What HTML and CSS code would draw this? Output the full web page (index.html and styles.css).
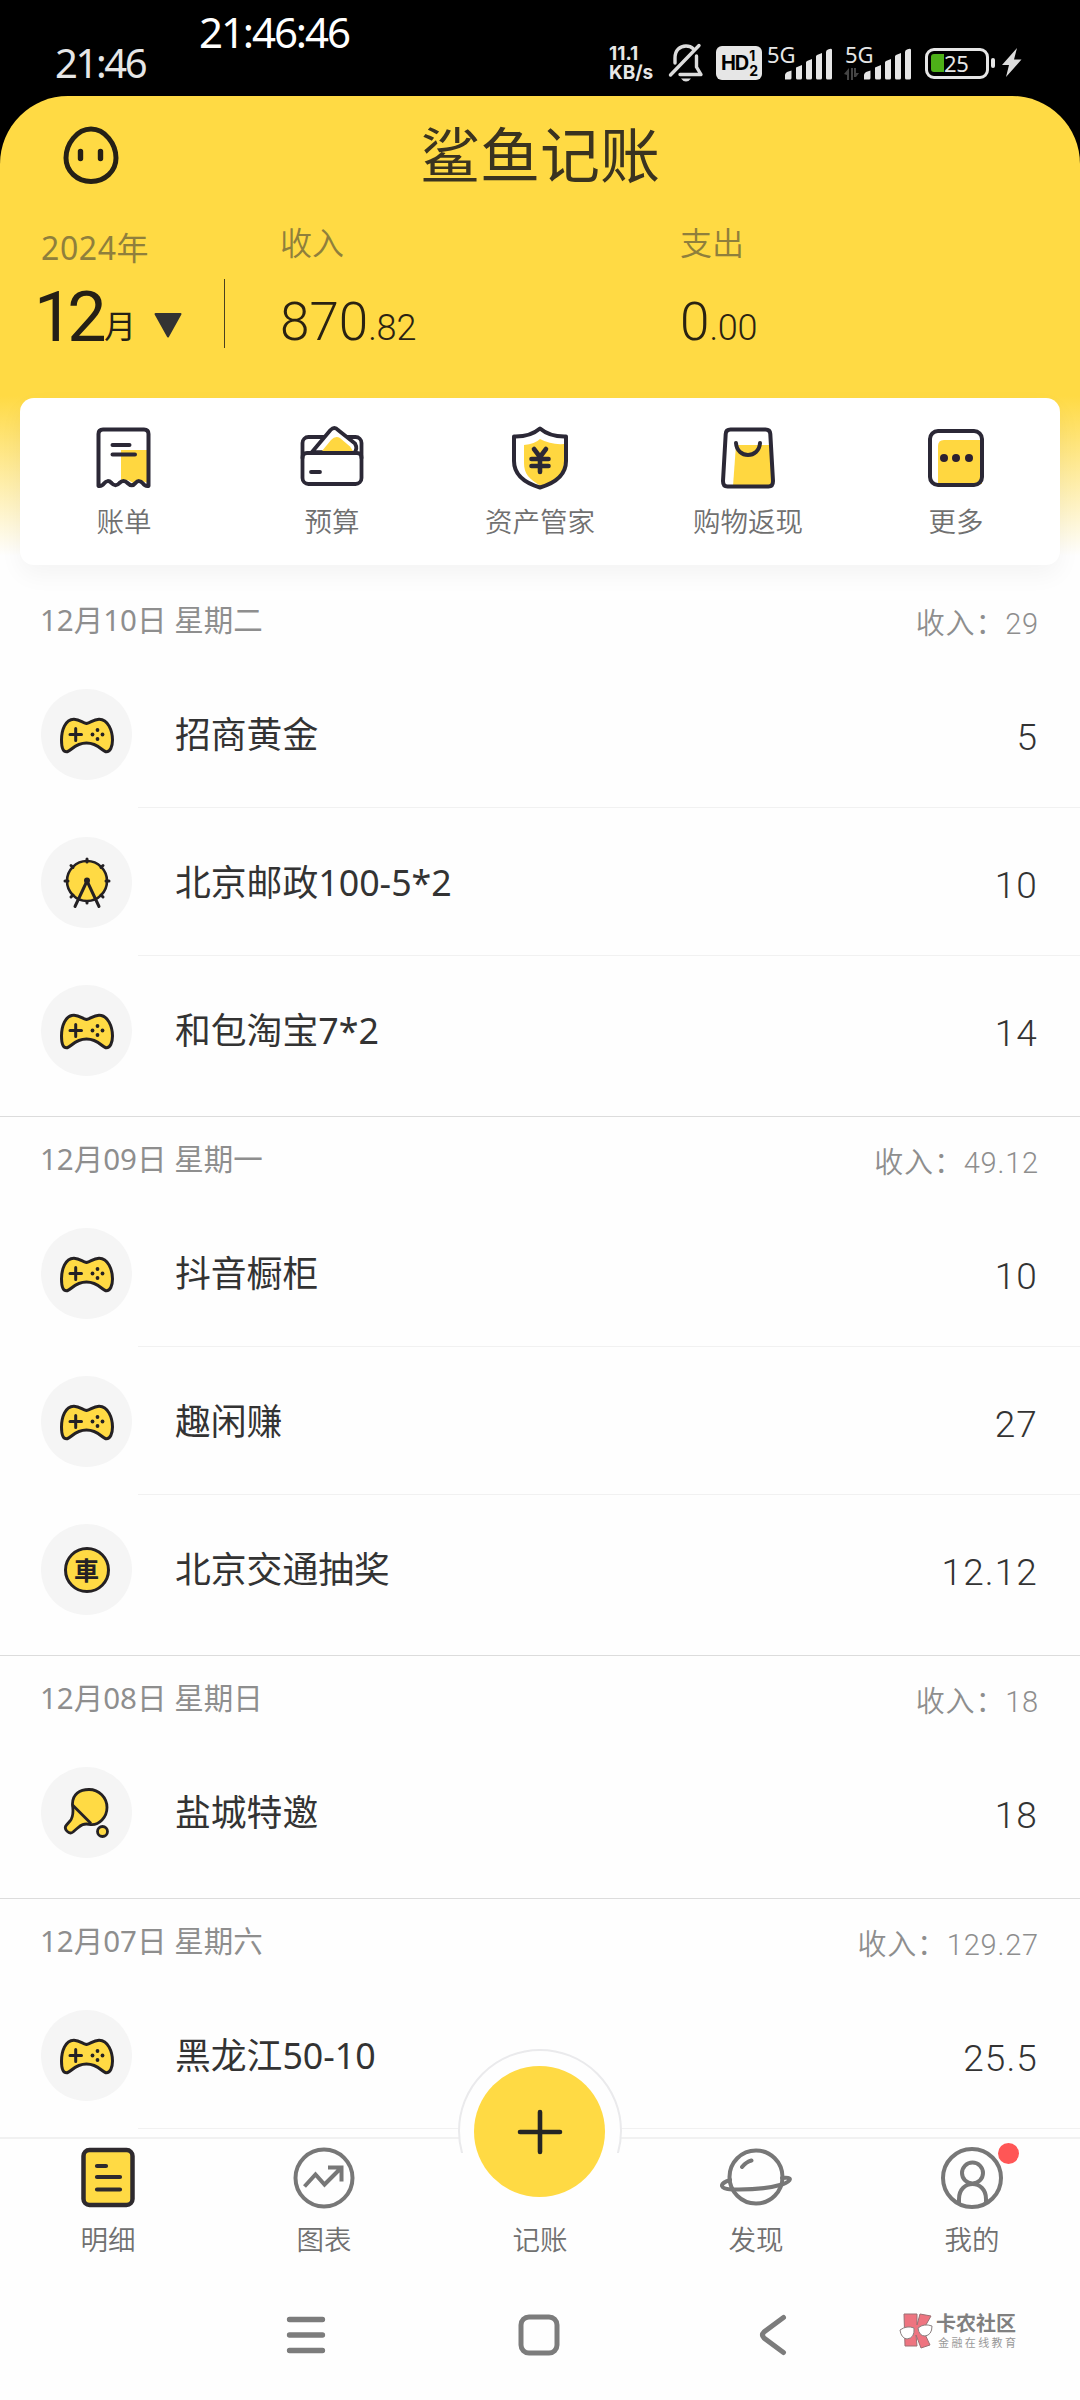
FILE: index.html
```html
<!DOCTYPE html>
<html lang="zh-CN">
<head>
<meta charset="utf-8">
<title>鲨鱼记账</title>
<link rel="stylesheet" href="styles.css">
</head>
<body>
<svg class="defs" width="0" height="0" aria-hidden="true">
  <symbol id="gamepad" viewBox="0 0 56 38">
    <path d="M27.500 7.500C32 6.500 34 3.500 40 3.200C49 3 53.500 15 53.500 24C53.500 31 51 35.800 47.500 35.800C43 35.800 40 27 27.500 27S12 35.800 7.500 35.800C4 35.800 2.500 31 2.500 24C2.500 15 6 3 15 3.200C21 3.500 23 6.500 27.500 7.500Z" fill="#ffda44" stroke="#242124" stroke-width="3"/>
    <path d="M11 18.500H22.500M16.700 12.500V24.500" stroke="#242124" stroke-width="3" stroke-linecap="round"/>
    <g fill="#242124"><circle cx="38.500" cy="14" r="1.900"/><circle cx="43.500" cy="18.500" r="1.900"/><circle cx="38.500" cy="23" r="1.900"/><circle cx="33.500" cy="18.500" r="1.900"/></g>
  </symbol>
  <symbol id="wheel" viewBox="0 0 50 54">
    <g fill="none" stroke="#242124" stroke-width="3" stroke-linecap="round">
      <circle cx="25" cy="25" r="20" fill="#ffda44" stroke-width="2.600"/>
      <path d="M25 3V6M3 25H6M44 25H47M9 9.500L11 11.500M41 9.500L39 11.500M9 41L11 39M41 41L39 39M25 45.500V47"/>
      <path d="M25 25L13 50.500M25 25L37 50.500"/>
    </g>
    <circle cx="25" cy="24.500" r="3" fill="#242124"/>
  </symbol>
  <symbol id="paddle" viewBox="0 0 48 52">
    <g stroke="#242124" stroke-width="2.800" fill="#ffda44" stroke-linejoin="round">
      <path d="M9.500 18C9 7 17 2.500 26 2.500C36 2.500 44 10.500 44 20.500C44 30.500 36 38 28 37.500C20 36 18 38 14 41.500L10 45C6 48 0 42 3.500 38L7 34C10.500 30 10.500 25 9.500 18Z"/>
      <path d="M9.500 18L28 36.500" fill="none"/>
      <circle cx="39.500" cy="44.500" r="5"/>
    </g>
  </symbol>
  <symbol id="signal" viewBox="0 0 48 32">
    <path d="M1 31.500V27Q1 25.500 3 24L7.500 22.500V30Q7.500 31.500 6 31.500ZM12 19.500L18 17V30Q18 31.500 16.500 31.500H13.500Q12 31.500 12 30ZM22 14.500Q22 13.500 23 13L28 11V30Q28 31.500 26.500 31.500H23.500Q22 31.500 22 30ZM32 8.500Q32 7.500 33 7L38 5V30Q38 31.500 36.500 31.500H33.500Q32 31.500 32 30ZM42 4Q42 2 44 1.500Q48 0 48 2V30Q48 31.500 46.500 31.500H43.500Q42 31.500 42 30Z" fill="#e6e6e6"/>
  </symbol>
</svg>

<div class="screen">
  <div class="status">
    <span class="status-time">21:46</span>
    <span class="status-clock">21:46:46</span>
    <div class="status-icons">
      <div class="net"><span>11.1</span><span>KB/s</span></div>
      <svg class="bell" width="36" height="40" viewBox="0 0 36 40" fill="none" stroke="#dcdcdc" stroke-width="3.400" stroke-linecap="round" stroke-linejoin="round">
        <path d="M7 20V15C7 7 12 3 18 3C21 3 23.500 4 25 5.500M28.500 13V24L33 31.500H12"/><path d="M2.500 32L31 2.500"/><path d="M13 35.500H23Q21 38.500 18 38.500T13 35.500Z" fill="#dcdcdc" stroke="none"/>
      </svg>
      <div class="hd"><span>HD</span><div class="hd-num"><span>1</span><span>2</span></div></div>
      <div class="cell"><span>5G</span><svg width="48" height="32"><use href="#signal"/></svg></div>
      <div class="cell cell-data"><span>5G</span><svg class="arrows" width="15" height="12" viewBox="0 0 15 12"><path d="M0 6L5 0V12H3V7ZM7 0H9L9 12H7ZM10 0H12V5H15L12 9H10Z" fill="#444"/></svg><svg width="48" height="32"><use href="#signal"/></svg></div>
      <div class="battery"><span class="battery-level"></span><span class="battery-text">25</span></div>
      <span class="battery-tip"></span>
      <svg class="bolt" width="20" height="30" viewBox="0 0 20 30"><path d="M15 0L0 17H7L4 29L19.500 11.500H12Z" fill="#dcdcdc"/></svg>
    </div>
  </div>

  <div class="app">
    <header class="top">
      <div class="title-row">
        <svg class="face" width="56" height="58" viewBox="0 0 56 58"><path d="M28 3C42 3 53 18 53 32C53 45 42 55.500 28 55.500S3 45 3 32C3 18 14 3 28 3Z" fill="none" stroke="#252016" stroke-width="5"/><path d="M17.500 25.500V32.500M37.500 25.500V32.500" stroke="#252016" stroke-width="5.400" stroke-linecap="round"/></svg>
        <h1>鲨鱼记账</h1>
      </div>
      <div class="summary">
        <div class="month-box">
          <div class="year">2024年</div>
          <div class="month"><b>12</b><span>月</span><svg width="28" height="25" viewBox="0 0 28 25"><path d="M1.500 1H26.500L14 23.500Z" fill="#333" stroke="#333" stroke-width="2" stroke-linejoin="round"/></svg></div>
        </div>
        <div class="sum"><div class="sum-label">收入</div><div class="sum-value">870<small>.82</small></div></div>
        <div class="sum"><div class="sum-label">支出</div><div class="sum-value">0<small>.00</small></div></div>
      </div>
    </header>

    <section class="card">
      <div class="tool">
        <svg width="56" height="64" viewBox="0 0 56 64"><path d="M25 24H52V57L46 55L39 58L32 54L25 57Z" fill="#ffd740"/><path d="M2.500 60V8Q2.500 3.500 7 3.500H48Q52.500 3.500 52.500 8V60Q49 60.500 47 57.500Q43 53 39.500 57Q36 61.500 31.500 57Q27.500 53 23.500 57Q19.500 61.500 15.500 57Q11.500 53 8 57.500Q6 60.500 2.500 60Z" fill="none" stroke="#2b2836" stroke-width="4" stroke-linejoin="round"/><path d="M16.500 19H33.500M16.500 28.500H39" stroke="#2b2836" stroke-width="4" stroke-linecap="round"/></svg>
        <span>账单</span>
      </div>
      <div class="tool">
        <svg width="64" height="64" viewBox="0 0 64 64"><g fill="none" stroke="#2b2836" stroke-width="3.800" stroke-linejoin="round" stroke-linecap="round"><rect x="2.500" y="11" width="59" height="47" rx="6"/><path d="M12 26L30.500 4Q34.500 0 38 4L55 17.500Q58 23 54 27Z" fill="#fff"/><path d="M22 25L31 14Q35.500 9 40 12L50 20.500L53 25Z" fill="#ffd740" stroke="none"/><path d="M2.500 32Q2.500 27 7 27H57Q61.500 27 61.500 32"/><path d="M11 46H20"/></g></svg>
        <span>预算</span>
      </div>
      <div class="tool">
        <svg width="60" height="66" viewBox="0 0 60 66"><path d="M14 20Q25 19 30 14Q41 20 54 19V38C54 50 44 57 31 61C19 54 14 49 14 38Z" fill="#ffd740"/><path d="M30 3.500Q40 12 56 11.500V36C56 50 45 58 30 62.500C15 58 4 50 4 36V11.500Q20 12 30 3.500Z" fill="none" stroke="#2b2836" stroke-width="4" stroke-linejoin="round"/><path d="M24 24L30 32L36 24M30 33V47M21.500 34H38.500M21.500 41H38.500" fill="none" stroke="#2b2836" stroke-width="4.600" stroke-linecap="round" stroke-linejoin="round"/></svg>
        <span>资产管家</span>
      </div>
      <div class="tool">
        <svg width="56" height="64" viewBox="0 0 56 64"><path d="M16 19H50L52 56Q52 60 48 60H13Z" fill="#ffd740"/><path d="M10.500 3.500H45.500Q50 3.500 50.300 8L53 55Q53 60.500 48.500 60.500H7.500Q3 60.500 3 55L5.700 8Q6 3.500 10.500 3.500Z" fill="none" stroke="#2b2836" stroke-width="4"/><path d="M16 17C17 33 39 33 40 17" fill="none" stroke="#2b2836" stroke-width="4" stroke-linecap="round"/></svg>
        <span>购物返现</span>
      </div>
      <div class="tool">
        <svg width="58" height="64" viewBox="0 0 58 64"><path d="M11 20Q11 14 17 14H55V58H11Z" fill="#ffd740"/><rect x="3" y="5" width="52" height="54" rx="8" fill="none" stroke="#2b2836" stroke-width="4"/><g fill="#2b2030"><circle cx="17" cy="32" r="4"/><circle cx="29" cy="32" r="4"/><circle cx="42" cy="32" r="4"/></g></svg>
        <span>更多</span>
      </div>
    </section>

    <main class="list">
      <section class="day">
        <div class="day-head"><span class="date">12月10日 星期二</span><span class="total">收入：<i>29</i></span></div>
        <div class="item"><span class="dot"><svg width="56" height="38"><use href="#gamepad"/></svg></span><div class="line"><span class="name">招商黄金</span><span class="amount">5</span></div></div>
        <div class="item"><span class="dot"><svg width="50" height="54"><use href="#wheel"/></svg></span><div class="line"><span class="name">北京邮政100-5*2</span><span class="amount">10</span></div></div>
        <div class="item"><span class="dot"><svg width="56" height="38"><use href="#gamepad"/></svg></span><div class="line"><span class="name">和包淘宝7*2</span><span class="amount">14</span></div></div>
      </section>
      <section class="day">
        <div class="day-head"><span class="date">12月09日 星期一</span><span class="total">收入：<i>49.12</i></span></div>
        <div class="item"><span class="dot"><svg width="56" height="38"><use href="#gamepad"/></svg></span><div class="line"><span class="name">抖音橱柜</span><span class="amount">10</span></div></div>
        <div class="item"><span class="dot"><svg width="56" height="38"><use href="#gamepad"/></svg></span><div class="line"><span class="name">趣闲赚</span><span class="amount">27</span></div></div>
        <div class="item"><span class="dot"><span class="coin">車</span></span><div class="line"><span class="name">北京交通抽奖</span><span class="amount">12.12</span></div></div>
      </section>
      <section class="day">
        <div class="day-head"><span class="date">12月08日 星期日</span><span class="total">收入：<i>18</i></span></div>
        <div class="item"><span class="dot"><svg width="48" height="52"><use href="#paddle"/></svg></span><div class="line"><span class="name">盐城特邀</span><span class="amount">18</span></div></div>
      </section>
      <section class="day">
        <div class="day-head"><span class="date">12月07日 星期六</span><span class="total">收入：<i>129.27</i></span></div>
        <div class="item"><span class="dot"><svg width="56" height="38"><use href="#gamepad"/></svg></span><div class="line"><span class="name">黑龙江50-10</span><span class="amount">25.5</span></div></div>
        <div class="item"></div>
      </section>
    </main>
  </div>

  <nav class="tabs">
    <div class="tab">
      <svg width="62" height="62" viewBox="0 0 62 62"><rect x="6.500" y="3" width="49" height="55" rx="6" fill="#ffda44" stroke="#2e2a2e" stroke-width="4.500"/><path d="M20 19H29M20 30H43M20 42.500H43" stroke="#2e2a2e" stroke-width="4.200" stroke-linecap="round"/></svg>
      <span>明细</span>
    </div>
    <div class="tab">
      <svg width="62" height="62" viewBox="0 0 62 62" fill="none" stroke="#777" stroke-width="4"><circle cx="31" cy="31" r="28.500"/><path d="M11.500 39.500L22.500 27.500L31.500 37.500L48 21M35 20.500H48.500V34.500"/></svg>
      <span>图表</span>
    </div>
    <div class="tab"><svg width="62" height="62"></svg><span>记账</span></div>
    <div class="tab">
      <svg width="72" height="62" viewBox="0 0 72 62" fill="none" stroke="#777" stroke-width="4"><circle cx="36" cy="30" r="26.500"/><path d="M10 33C-2 37 0 42 12 42.500C32 43 50 41 62 37.500C72 34 73 29.500 62 31M22 20Q26 15 31.500 13.500" stroke-linecap="round"/></svg>
      <span>发现</span>
    </div>
    <div class="tab tab-me">
      <svg width="64" height="62" viewBox="0 0 64 62" fill="none" stroke="#777" stroke-width="4"><circle cx="32" cy="31" r="29"/><circle cx="32.500" cy="26" r="10.500"/><path d="M19 56V52C19 32 46 32 46 52V56"/></svg>
      <span>我的</span>
      <i class="badge"></i>
    </div>
    <div class="fab-ring"></div>
    <div class="fab"><svg width="46" height="46" viewBox="0 0 46 46"><path d="M3 23H43M23 3V43" stroke="#252525" stroke-width="4.600" stroke-linecap="round"/></svg></div>
  </nav>

  <div class="sysbar">
    <svg width="40" height="40" viewBox="0 0 40 40"><path d="M3.500 4.500H36.500M3.500 20H36.500M3.500 35.500H36.500" stroke="#7c7c7c" stroke-width="5.300" stroke-linecap="round"/></svg>
    <svg width="42" height="42" viewBox="0 0 42 42"><rect x="3" y="3" width="36" height="36" rx="8" fill="none" stroke="#7c7c7c" stroke-width="5"/></svg>
    <svg width="28" height="42" viewBox="0 0 28 42"><path d="M24.500 3.500L5 18Q2 21 5 24L24.500 38.500" fill="none" stroke="#7c7c7c" stroke-width="5" stroke-linecap="round"/></svg>
    <div class="mark">
      <svg width="34" height="36" viewBox="0 0 34 36"><g fill="#ee7480" stroke="#9b7074" stroke-width="1"><path d="M5 1H18L18 12L21 1L32 3L24 17L31 32L22 35L17 22L18 33H6Z"/></g><g fill="#fff" stroke="#8a8080" stroke-width="1"><path d="M1 17Q8 12 15 15Q16 25 8 26Q2 25 1 17ZM19 15Q25 10 33 13Q33 22 26 23Q20 23 19 15Z"/></g></svg>
      <div class="mark-text"><b>卡农社区</b><span>金融在线教育</span></div>
    </div>
  </div>
</div>
</body>
</html>
```
FILE: styles.css
```css
* { box-sizing: border-box; }
body { margin: 0; background: #000; font-family: "Noto Sans", "Noto Sans CJK SC", sans-serif; }
svg { display: block; flex: none; }
.defs { position: absolute; }
i { font-style: normal; }

.screen { width: 1080px; height: 2400px; overflow: hidden; display: flex; flex-direction: column; }

/* status bar */
.status { height: 96px; flex: none; display: flex; align-items: flex-start; color: #e6e6e6; font-family: "Noto Sans", sans-serif; white-space: nowrap; }
.status-time { width: 143px; margin: 43px 0 0 55px; font-size: 40px; line-height: 40px; letter-spacing: -2.400px; }
.status-clock { margin: 11px 0 0 1px; width: 170px; font-size: 42px; line-height: 42px; letter-spacing: -2.100px; color: #fff; }
.status-icons { display: flex; align-items: center; margin: 44px 0 0 240px; height: 38px; }
.net { width: 48px; font: 700 19px/19px Inter, sans-serif; display: flex; flex-direction: column; letter-spacing: 0; }
.bell { margin-left: 11px; }
.hd { width: 46px; height: 34px; margin-left: 12px; border-radius: 6px; background: #e6e6e6; color: #000; display: flex; align-items: center; justify-content: center; gap: 1px; font: 700 20px/30px Inter, sans-serif; letter-spacing: -1px; }
.hd-num { display: flex; flex-direction: column; font-size: 14px; line-height: 15px; }
.cell { display: flex; align-items: flex-end; height: 34px; margin-left: 5px; width: 65px; position: relative; justify-content: flex-end; }
.cell > span { position: absolute; left: 0; top: -1px; font: 22px/18px "Noto Sans", sans-serif; }
.cell-data { margin-left: 13px; width: 66px; }
.arrows { margin-right: 4px; }
.battery { width: 64px; height: 31px; margin-left: 14px; border: 3.500px solid #e6e6e6; border-radius: 9px; display: flex; align-items: center; padding-left: 3px; }
.battery-level { width: 13px; height: 18px; background: #4db018; border-radius: 3px 0 0 3px; }
.battery-text { font: 22px/24px "Noto Sans", sans-serif; letter-spacing: -.3px; }
.battery-tip { width: 4px; height: 10px; margin-left: 2px; border-radius: 2px; background: #e6e6e6; }
.bolt { margin-left: 7px; }

/* app body */
.app { height: 2041px; flex: none; overflow: hidden; border-radius: 68px 68px 0 0; background: linear-gradient(#ffda44 0, #ffda44 300px, #fefefe 460px); }
.top { height: 302px; }
.title-row { height: 118px; display: grid; grid-template-columns: 1fr auto 1fr; align-items: start; padding: 30px 63px 0; }
h1 { margin: -6px 0 0; font: 400 60px/64px "Noto Sans CJK SC", sans-serif; color: #3a3320; }
.summary { display: grid; grid-template-columns: 225px 400px 1fr; color: #252016; }
.month-box { padding-left: 37px; position: relative; }
.month-box::after { content: ""; position: absolute; right: 0; top: 65px; width: 1.500px; height: 69px; background: #4a4020; }
.year { margin: 16px 0 0 4px; font-size: 32px; line-height: 36px; color: #8f7f3c; letter-spacing: .6px; font-weight: 400; }
.month { display: flex; align-items: flex-start; margin-top: 10px; height: 76px; }
.month b { font: 400 70px/76px Roboto, sans-serif; width: 65px; margin: 3px 0 0 -3px; letter-spacing: -6px; }
.month span { font-size: 32px; line-height: 40px; margin: 30px 0 0 5px; }
.month svg { margin: 37px 0 0 18px; }
.sum { padding-left: 55px; }
.sum-label { margin-top: 12px; font-size: 32px; line-height: 34px; color: #8f7f3c; font-weight: 350; }
.sum-value { margin-top: 22px; font: 300 53px/80px Roboto, sans-serif; color: #2a2212; }
.sum-value small { font-size: 36px; letter-spacing: -.2px; }

.card { width: 1040px; height: 167px; margin: 0 auto; padding: 27px 0 0; background: #fff; border-radius: 14px; box-shadow: 0 10px 24px rgba(0,0,0,.045); display: grid; grid-template-columns: repeat(5, 1fr); }
.tool { display: flex; flex-direction: column; align-items: center; font-size: 27.500px; line-height: 34px; color: #707070; gap: 14px; }
.tool span, .tab span { font-weight: 350; }
.tool svg { height: 66px; }

/* records */
.list { margin-top: 13px; }
.day { border-bottom: 1.500px solid #dcdcdc; padding-bottom: 12px; }
.day-head { height: 82px; display: flex; justify-content: space-between; padding: 21px 41px 0 40px; color: #8e8e8e; font-size: 29.500px; line-height: 42px; font-weight: 350; }
.date { font-weight: 400; }
.total { padding-top: 3px; font-size: 29px; letter-spacing: .8px; }
.total i { font: 300 29px/42px Roboto, sans-serif; }
.item { height: 148px; display: flex; align-items: flex-start; padding-left: 41px; }
.dot { width: 91px; height: 91px; flex: none; margin-top: 29px; border-radius: 50%; background: #f5f5f5; display: flex; align-items: center; justify-content: center; }
.line { flex: 1; height: 148px; margin-left: 6px; padding: 3px 42px 0 37px; display: flex; align-items: center; justify-content: space-between; border-bottom: 1.500px solid #f1f1f1; color: #333; }
.item:last-child .line { border-color: transparent; }
.name { font-size: 35.800px; line-height: 44px; font-weight: 400; padding-bottom: 2px; }
.amount { font: 300 37px/44px Roboto, sans-serif; padding-top: 6px; letter-spacing: 1.100px; }
.coin { width: 46px; height: 46px; border: 3px solid #242124; border-radius: 50%; background: #ffda44; color: #242124; font: 700 25px/39px "Noto Sans CJK TC", sans-serif; text-align: center; }

/* tab bar */
.tabs { height: 143px; flex: none; position: relative; background: #fefefe; border-top: 2px solid #f1f1f1; display: grid; grid-template-columns: repeat(5, 1fr); padding-top: 8px; }
.tab { display: flex; flex-direction: column; align-items: center; gap: 14px; font-size: 27.500px; line-height: 34px; color: #707070; z-index: 2; }
.tab-me { position: relative; }
.badge { position: absolute; left: 134px; top: -4px; width: 21px; height: 21px; border-radius: 50%; background: #ff5656; }
.fab-ring { position: absolute; left: 458px; top: -90px; width: 164px; height: 164px; border-radius: 50%; background: #fefefe; border: 2px solid #eaeaec; clip-path: inset(0 0 60px 0); }
.fab { position: absolute; left: 474px; top: -73px; width: 131px; height: 131px; border-radius: 50%; background: #ffda44; display: flex; align-items: center; justify-content: center; }

/* system navigation */
.sysbar { flex: 1; background: #fefefe; display: flex; align-items: flex-start; padding: 34px 0 0 286px; }
.sysbar > svg:nth-child(1) { margin-top: 1px; }
.sysbar > svg:nth-child(2) { margin-left: 192px; }
.sysbar > svg:nth-child(3) { margin-left: 199px; }
.mark { display: flex; margin: -1px 0 0 112px; gap: 3px; }
.mark-text { display: flex; flex-direction: column; white-space: nowrap; color: #808080; }
.mark-text b { font: 700 20px/20px "Noto Sans CJK SC", sans-serif; }
.mark-text span { font: 11px/12px "Noto Sans CJK SC", sans-serif; margin-top: 3px; letter-spacing: 2.400px; color: #999; padding-left: 2px; }
```
